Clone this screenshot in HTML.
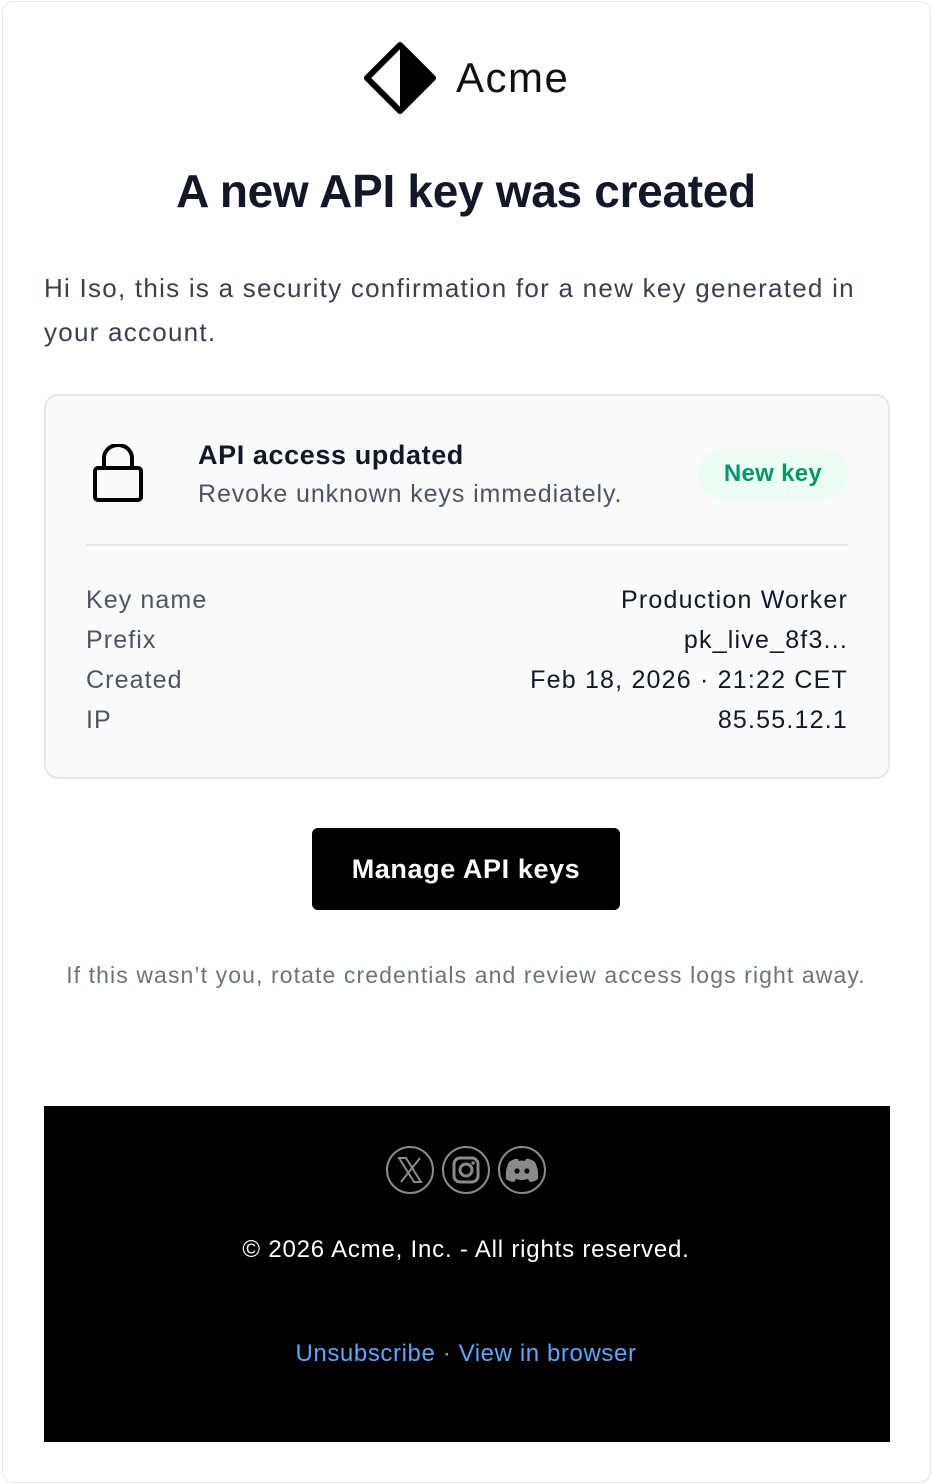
<!DOCTYPE html>
<html><head><meta charset="utf-8"><style>
*{margin:0;padding:0;box-sizing:border-box}
body{width:932px;height:1484px;background:#fff;font-family:"Liberation Sans",sans-serif;position:relative;overflow:hidden}
.frame{position:absolute;left:2px;top:1px;width:929px;height:1482px;border:1px solid #e5e7eb;border-radius:12px}
.abs{position:absolute;white-space:nowrap}
</style></head><body>
<div class="frame"></div>
<svg class="abs" style="left:362px;top:40px" width="76" height="76" viewBox="0 0 76 76">
<path d="M38 4 L72 38 L38 72 Z" fill="#000"/>
<path d="M38 5 L5 38 L38 71 L71 38 Z" fill="none" stroke="#000" stroke-width="6" stroke-linejoin="round"/>
</svg>
<div class="abs" style="left:456px;top:54px;font-size:42px;color:#111;letter-spacing:1.5px">Acme</div>
<div class="abs" style="left:0;width:932px;text-align:center;top:164px;font-size:46px;font-weight:bold;color:#111827;letter-spacing:-0.3px">A new API key was created</div>
<div class="abs" style="left:44px;top:266px;font-size:26px;line-height:44px;color:#374151;white-space:normal;width:840px;letter-spacing:1.25px">Hi Iso, this is a security confirmation for a new key generated in your account.</div>
<div class="abs" style="left:44px;top:394px;width:846px;height:385px;background:#f8fafc;border:2px solid #e5e7eb;border-radius:14px"></div>
<svg class="abs" style="left:92px;top:444px" width="52" height="60" viewBox="0 0 52 60">
<rect x="3" y="24" width="46" height="32" rx="3" fill="none" stroke="#000" stroke-width="4"/>
<path d="M12 24 V14 A14 13 0 0 1 40 14 V24" fill="none" stroke="#000" stroke-width="4"/>
</svg>
<div class="abs" style="left:198px;top:440px;font-size:27px;font-weight:bold;color:#111827;letter-spacing:0.6px">API access updated</div>
<div class="abs" style="left:198px;top:480px;font-size:25px;color:#4b5563;letter-spacing:0.9px">Revoke unknown keys immediately.</div>
<div class="abs" style="left:698px;top:449px;width:150px;height:50px;border-radius:25px;background:#ecfdf3;color:#059669;font-size:24px;font-weight:bold;text-align:center;line-height:50px;letter-spacing:0.3px">New key</div>
<div class="abs" style="left:86px;top:544px;width:762px;height:2px;background:#e5e7eb"></div>
<div class="abs" style="left:86px;top:580px;font-size:25px;line-height:40px;color:#4b5563;letter-spacing:1.1px">Key name<br>Prefix<br>Created<br>IP</div>
<div class="abs" style="right:84px;top:580px;font-size:25px;line-height:40px;color:#111827;text-align:right;letter-spacing:1.2px">Production Worker<br>pk_live_8f3...<br>Feb 18, 2026 · 21:22 CET<br>85.55.12.1</div>
<div class="abs" style="left:312px;top:828px;width:308px;height:82px;background:#000;border-radius:6px;color:#fff;font-size:27px;font-weight:bold;text-align:center;line-height:82px;letter-spacing:0.6px">Manage API keys</div>
<div class="abs" style="left:0;width:932px;text-align:center;top:962px;font-size:23px;color:#6b7280;letter-spacing:1.1px">If this wasn’t you, rotate credentials and review access logs right away.</div>
<div class="abs" style="left:44px;top:1106px;width:846px;height:336px;background:#000"></div>
<svg class="abs" style="left:384px;top:1144px" width="164" height="52" viewBox="0 0 164 52">
<g fill="none" stroke="#8a8a8a" stroke-width="2">
<circle cx="26" cy="26" r="23"/><circle cx="82" cy="26" r="23"/><circle cx="138" cy="26" r="23"/>
<path d="M15 14 H22 L37 38 H30 Z M36 14 L17 38"/>
<rect x="70" y="14" width="24" height="24" rx="6" stroke-width="3"/>
<circle cx="82" cy="26" r="6" stroke-width="3"/>
</g>
<circle cx="89" cy="19" r="1.8" fill="#8a8a8a"/>
<path d="M125 18 Q131 14 134 15 L135 17 Q138 16 141 17 L142 15 Q145 14 151 18 Q155 26 154 35 Q150 38 146 38 L144 35 Q138 37 132 35 L130 38 Q126 38 122 35 Q121 26 125 18 Z" fill="#8a8a8a"/>
<circle cx="133" cy="27" r="2.6" fill="#000"/><circle cx="143" cy="27" r="2.6" fill="#000"/>
</svg>
<div class="abs" style="left:0;width:932px;text-align:center;top:1236px;font-size:24px;color:#fff;letter-spacing:0.8px">© 2026 Acme, Inc. - All rights reserved.</div>
<div class="abs" style="left:0;width:932px;text-align:center;top:1340px;font-size:24px;color:#60a5fa;letter-spacing:0.6px">Unsubscribe <span style="color:#9ca3af">·</span> View in browser</div>
</body></html>
